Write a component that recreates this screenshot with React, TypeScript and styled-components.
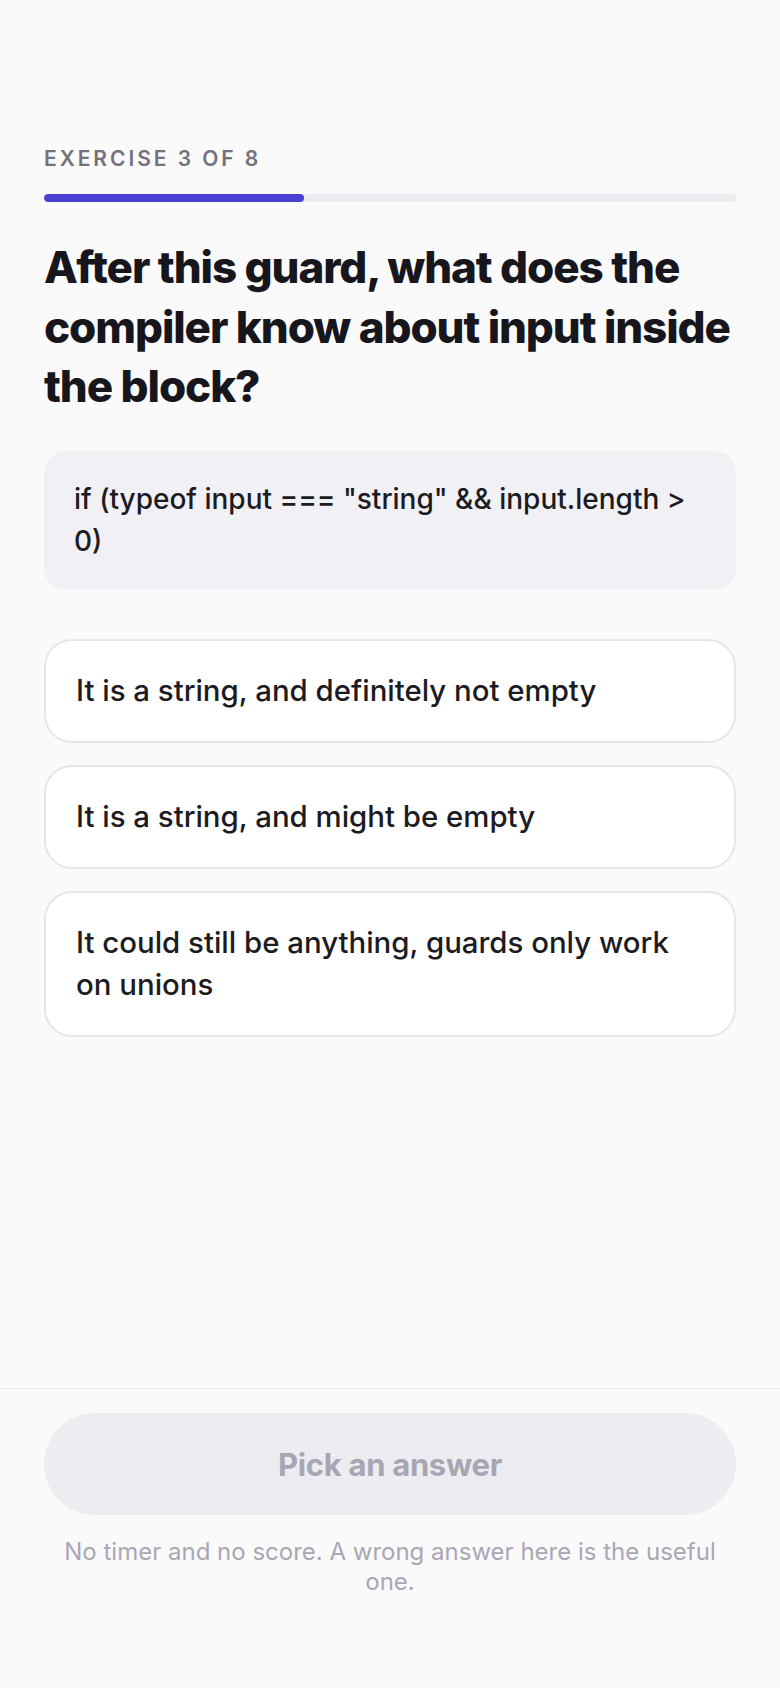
import * as React from 'react';
import styled, { createGlobalStyle } from 'styled-components';

const GlobalStyle = createGlobalStyle`
    * {
        box-sizing: border-box;
    }

    html,
    body {
        margin: 0;
        padding: 0;
        background: #fafafb;
        font-family: Inter, 'Noto Sans', 'Liberation Sans', sans-serif;
        -webkit-font-smoothing: antialiased;
    }
`;

const options = [
    'It is a string, and definitely not empty',
    'It is a string, and might be empty',
    'It could still be anything, guards only work on unions',
];

const App: React.FC = () => {
    const current = 3;
    const total = 8;

    return (
        <>
            <GlobalStyle />
            <StyledPage>
                <StyledMain>
                    <StyledStep>
                        Exercise {current} of {total}
                    </StyledStep>
                    <StyledTrack>
                        <StyledFill style={{ width: `${(current / total) * 100}%` }} />
                    </StyledTrack>

                    <StyledQuestion>
                        After this guard, what does the compiler know about input inside the block?
                    </StyledQuestion>

                    <StyledCode>if (typeof input === "string" &amp;&amp; input.length &gt; 0)</StyledCode>

                    <StyledOptions>
                        {options.map((option) => (
                            <StyledOption key={option} type="button">
                                {option}
                            </StyledOption>
                        ))}
                    </StyledOptions>
                </StyledMain>

                <StyledFooter>
                    <StyledSubmit type="button" disabled>
                        Pick an answer
                    </StyledSubmit>
                    <StyledNote>No timer and no score. A wrong answer here is the useful one.</StyledNote>
                </StyledFooter>
            </StyledPage>
        </>
    );
};

const StyledPage = styled.div`
    min-height: 100vh;
    display: flex;
    flex-direction: column;
    background: #fafafb;
`;

const StyledMain = styled.main`
    flex: 1;
    display: flex;
    flex-direction: column;
    padding: 147px 44px 40px;
`;

const StyledStep = styled.p`
    margin: 0;
    font-size: 21px;
    line-height: 24px;
    font-weight: 600;
    letter-spacing: 0.14em;
    text-transform: uppercase;
    color: #75717f;
`;

const StyledTrack = styled.div`
    margin-top: 23px;
    height: 8px;
    border-radius: 4px;
    background: #ececf0;
    overflow: hidden;
`;

const StyledFill = styled.div`
    height: 100%;
    border-radius: 4px;
    background: #4a40d4;
`;

const StyledQuestion = styled.h1`
    margin: 36px 0 0;
    font-size: 44px;
    line-height: 59.5px;
    font-weight: 800;
    letter-spacing: -0.025em;
    color: #17161d;
`;

const StyledCode = styled.div`
    margin-top: 34px;
    padding: 27px 30px 28px;
    border-radius: 22px;
    background: #f1f0f5;
    font-size: 28px;
    line-height: 42px;
    font-weight: 500;
    color: #1c1b22;
`;

const StyledOptions = styled.div`
    display: flex;
    flex-direction: column;
    gap: 22px;
    margin-top: 49px;
`;

const StyledOption = styled.button`
    display: block;
    width: 100%;
    padding: 29px 30px;
    border: 2px solid #e6e5ea;
    border-radius: 28px;
    background: #ffffff;
    font-family: inherit;
    font-size: 29.4px;
    line-height: 42px;
    font-weight: 500;
    text-align: left;
    color: #1c1b22;
    cursor: pointer;
`;

const StyledFooter = styled.footer`
    display: flex;
    flex-direction: column;
    gap: 22px;
    padding: 24px 44px 92px;
    border-top: 1px solid #e6e5ea;
`;

const StyledSubmit = styled.button`
    height: 102px;
    border: none;
    border-radius: 999px;
    background: #ececf1;
    font-family: inherit;
    font-size: 31px;
    font-weight: 700;
    letter-spacing: -0.01em;
    color: #a8a6b2;
`;

const StyledNote = styled.p`
    margin: 0;
    font-size: 24px;
    line-height: 29.5px;
    text-align: center;
    color: #a9a7b3;
`;

export default App;
